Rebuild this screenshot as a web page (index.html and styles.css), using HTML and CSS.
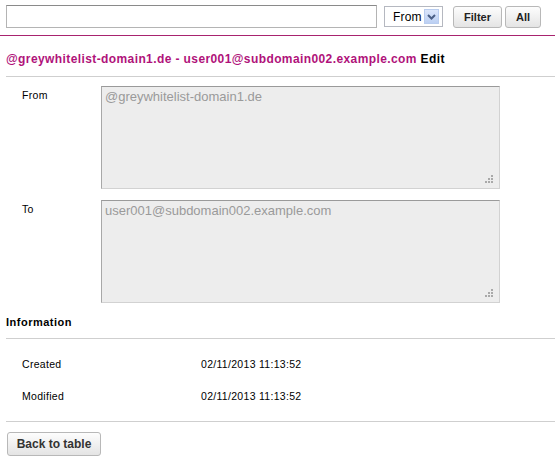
FILE: index.html
```html
<!DOCTYPE html>
<html>
<head>
<meta charset="utf-8">
<link rel="stylesheet" href="styles.css">
</head>
<body>
<div class="toolbar">
  <div class="search"></div>
  <div class="select">
    <span class="select-text">From</span>
    <span class="select-arrow">
      <svg width="9" height="6" viewBox="0 0 9 6"><path d="M1 1 L4.5 4.5 L8 1" fill="none" stroke="#4a5f86" stroke-width="2"/></svg>
    </span>
  </div>
  <button class="btn btn-filter">Filter</button>
  <button class="btn btn-all">All</button>
</div>
<div class="rule-accent"></div>
<h2 class="title"><span class="title-main">@greywhitelist-domain1.de - user001@subdomain002.example.com</span> <span class="title-edit">Edit</span></h2>
<div class="rule"></div>
<div class="form">
  <div class="form-row">
    <div class="form-label">From</div>
    <div class="area">@greywhitelist-domain1.de
      <svg class="grip" width="9" height="9" viewBox="0 0 9 9"><rect x="7" y="1" width="2" height="2"/><rect x="4" y="4" width="2" height="2"/><rect x="7" y="4" width="2" height="2"/><rect x="1" y="7" width="2" height="2"/><rect x="4" y="7" width="2" height="2"/><rect x="7" y="7" width="2" height="2"/></svg>
    </div>
  </div>
  <div class="form-row">
    <div class="form-label">To</div>
    <div class="area">user001@subdomain002.example.com
      <svg class="grip" width="9" height="9" viewBox="0 0 9 9"><rect x="7" y="1" width="2" height="2"/><rect x="4" y="4" width="2" height="2"/><rect x="7" y="4" width="2" height="2"/><rect x="1" y="7" width="2" height="2"/><rect x="4" y="7" width="2" height="2"/><rect x="7" y="7" width="2" height="2"/></svg>
    </div>
  </div>
</div>
<h3 class="section">Information</h3>
<div class="rule"></div>
<div class="info">
  <div class="info-row"><span class="info-label">Created</span><span class="info-value">02/11/2013 11:13:52</span></div>
  <div class="info-row"><span class="info-label">Modified</span><span class="info-value">02/11/2013 11:13:52</span></div>
</div>
<div class="rule rule-bottom"></div>
<button class="btn btn-back">Back to table</button>
</body>
</html>
```

FILE: styles.css
```css
body {
  margin: 0;
  background: #fff;
  color: #000;
  font-family: "Liberation Sans", Arial, sans-serif;
  font-size: 11px;
}

.toolbar {
  display: flex;
  align-items: flex-start;
  height: 35px;
  box-sizing: border-box;
  padding: 5px 0 0 6px;
}

.search {
  width: 371px;
  height: 23px;
  box-sizing: border-box;
  border: 1px solid #b4b4b4;
  border-top-color: #8a8a8a;
  background: #fff;
}

.select {
  margin-left: 7px;
  margin-top: 1px;
  width: 59px;
  height: 21px;
  box-sizing: border-box;
  border: 1px solid #b5b8c0;
  display: flex;
  align-items: center;
  padding-left: 8px;
  font-size: 12px;
  color: #000;
}

.select-text {
  letter-spacing: 0.2px;
}

.select-arrow {
  margin-left: 2px;
  width: 15px;
  height: 15px;
  box-sizing: border-box;
  border: 1px solid #b9cdef;
  background: linear-gradient(#dbe6fb, #bcd0f3);
  display: flex;
  align-items: center;
  justify-content: center;
}

.btn {
  font-family: "Liberation Sans", Arial, sans-serif;
  font-weight: bold;
  font-size: 11px;
  color: #222;
  border: 1px solid #b8b8b8;
  border-radius: 3px;
  background: linear-gradient(#fdfdfd, #e4e4e4);
  padding: 0;
  margin: 0;
  box-sizing: border-box;
}

.btn-filter {
  margin-left: 10px;
  margin-top: 1px;
  width: 49px;
  height: 22px;
}

.btn-all {
  margin-left: 3px;
  margin-top: 1px;
  width: 36px;
  height: 22px;
}

.rule-accent {
  height: 1px;
  background: #a8236f;
}

.title {
  margin: 16px 0 10px 6px;
  font-size: 12px;
  line-height: 14px;
  font-weight: bold;
  letter-spacing: 0.4px;
}

.title-main {
  color: #b0127a;
}

.title-edit {
  color: #000;
}

.rule {
  height: 1px;
  margin-left: 6px;
  background: #cfcfcf;
}

.form {
  padding-top: 9px;
  display: flex;
  flex-direction: column;
  gap: 11px;
}

.form-row {
  display: flex;
  align-items: flex-start;
  padding-left: 22px;
}

.form-label {
  width: 79px;
  padding-top: 3px;
  font-size: 10.5px;
  line-height: 13px;
  letter-spacing: 0.3px;
}

.area {
  position: relative;
  width: 399px;
  height: 103px;
  box-sizing: border-box;
  border: 1px solid #d2d2d2;
  border-top-color: #9a9a9a;
  border-left-color: #a8a8a8;
  background: #ededed;
  color: #9a9a9a;
  font-size: 13px;
  line-height: 16px;
  padding: 2px 3px;
}

.grip {
  position: absolute;
  right: 6px;
  bottom: 5px;
  fill: #a9a9a9;
}

.section {
  margin: 13px 0 9px 6px;
  font-size: 11px;
  line-height: 13px;
  font-weight: bold;
  letter-spacing: 0.5px;
}

.info {
  padding: 19px 0 18px 22px;
  display: flex;
  flex-direction: column;
  gap: 19px;
}

.info-row {
  display: flex;
  font-size: 10.5px;
  line-height: 13px;
}

.info-label {
  width: 179px;
  letter-spacing: 0.3px;
}

.info-value {
  letter-spacing: 0.3px;
}

.rule-bottom {
  margin-bottom: 10px;
}

.btn-back {
  margin-left: 7px;
  width: 94px;
  height: 24px;
  font-size: 12px;
  color: #333;
}
```
